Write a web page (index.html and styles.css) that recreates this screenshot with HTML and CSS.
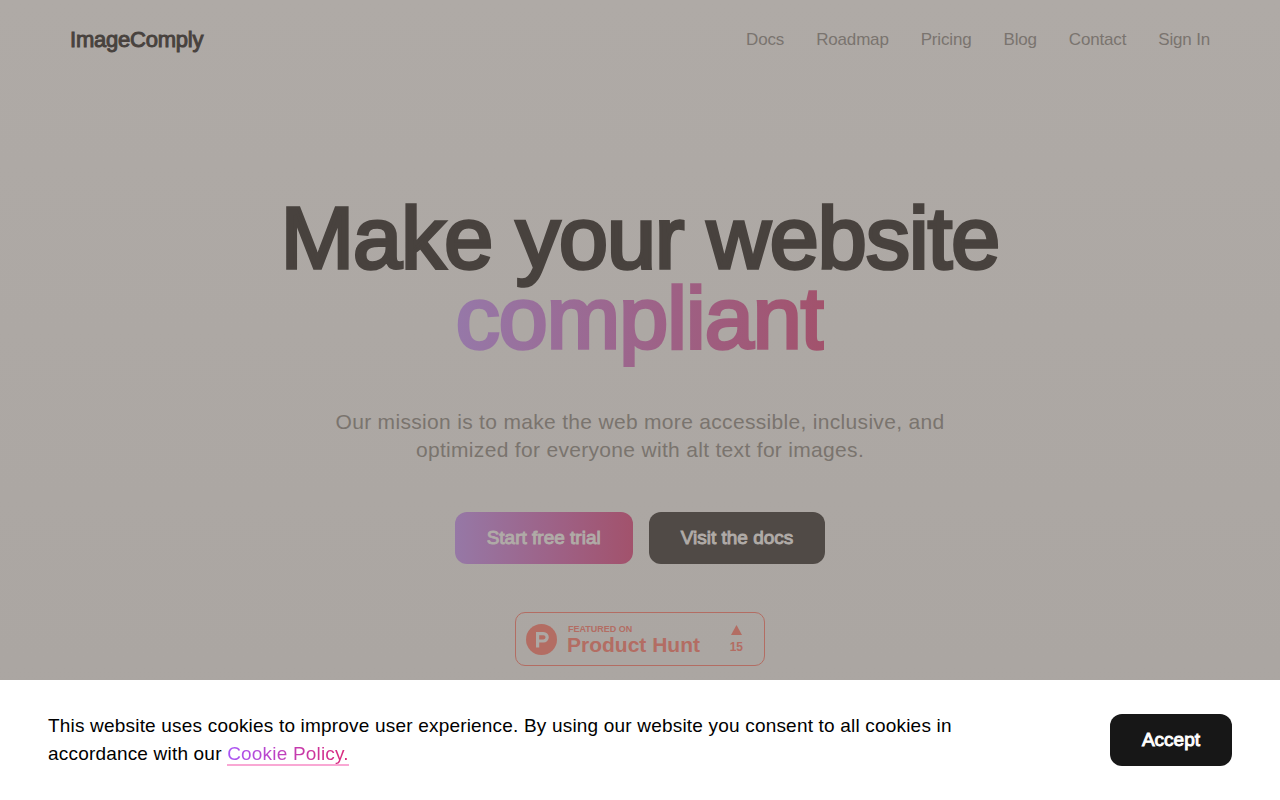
FILE: index.html
```
<!DOCTYPE html>
<html lang="en">
<head>
    <meta charset="UTF-8">
    <meta name="viewport" content="width=device-width, initial-scale=1.0">
    <title>ImageComply - Make your website compliant</title>
    <link rel="stylesheet" href="styles.css">
</head>

<body>
    <header class="header">
        <a class="logo" href="#">ImageComply</a>
        <nav class="nav">
            <a href="#">Docs</a>
            <a href="#">Roadmap</a>
            <a href="#">Pricing</a>
            <a href="#">Blog</a>
            <a href="#">Contact</a>
            <a href="#">Sign In</a>
        </nav>
    </header>

    <main class="hero">
        <h1>Make your website<br><span class="gradient-text">compliant</span></h1>
        <p class="lead">Our mission is to make the web more accessible, inclusive, and optimized for everyone with alt text for images.</p>
        <div class="actions">
            <button class="btn btn-gradient" type="button">Start free trial</button>
            <button class="btn btn-dark" type="button">Visit the docs</button>
        </div>
        <a class="badge" href="#">
            <svg class="badge-logo" viewBox="0 0 31 31" aria-hidden="true">
                <circle class="badge-circle" cx="15.5" cy="15.5" r="15.5"/>
                <path class="badge-mark" fill-rule="evenodd" d="M10 8h7.500a5.300 5.300 0 0 1 0 10.600H13.200V23.500H10zM13.200 11.200v4.300h4.200a2.150 2.150 0 0 0 0-4.300z"/>
            </svg>
            <span class="badge-text">
                <span class="badge-label">FEATURED ON</span>
                <span class="badge-name">Product Hunt</span>
            </span>
            <span class="badge-votes">
                <svg class="badge-arrow" viewBox="0 0 11 10" aria-hidden="true"><path d="M5.500 0L11 10H0z"/></svg>
                <span>15</span>
            </span>
        </a>
    </main>

    <div class="cookie-bar">
        <p>This website uses cookies to improve user experience. By using our website you consent to all cookies in accordance with our <a class="cookie-link" href="#">Cookie Policy.</a></p>
        <button class="btn btn-accept" type="button">Accept</button>
    </div>
</body>
</html>
```
FILE: styles.css
```
* {
    box-sizing: border-box;
}

body {
    font-family: 'Liberation Sans', Arial, sans-serif;
    margin: 0;
    min-height: 100vh;
    background: linear-gradient(#afaaa6, #aaa5a1);
    color: #48423e;
}

a {
    color: inherit;
    text-decoration: none;
}

/* Header */
.header {
    display: flex;
    justify-content: space-between;
    align-items: center;
    max-width: 1140px;
    height: 80px;
    margin: 0 auto;
}

.logo {
    font-size: 22px;
    letter-spacing: -0.01em;
    -webkit-text-stroke: 0.045em currentColor;
}

.nav {
    display: flex;
    gap: 32px;
    font-size: 17px;
    letter-spacing: -0.01em;
    color: #7a746f;
}

/* Hero */
.hero {
    display: flex;
    flex-direction: column;
    align-items: center;
    padding: 118px 24px 160px;
    text-align: center;
}

h1 {
    margin: 0 0 50px;
    font-size: 88px;
    font-weight: 400;
    line-height: 80px;
    letter-spacing: -0.01em;
    -webkit-text-stroke: 0.04em currentColor;
}

.gradient-text {
    background: linear-gradient(90deg, #9678a8, #9e6084 60%, #a2526c);
    -webkit-background-clip: text;
    background-clip: text;
    color: transparent;
    -webkit-text-stroke-color: transparent;
}

.lead {
    max-width: 640px;
    margin: 0 0 48px;
    font-size: 21px;
    line-height: 28px;
    letter-spacing: 0.015em;
    color: #7a746e;
}

.actions {
    display: flex;
    gap: 16px;
    margin-bottom: 48px;
}

.btn {
    height: 52px;
    padding: 0 32px;
    border: none;
    border-radius: 12px;
    font-family: inherit;
    font-size: 19px;
    color: #b0aba7;
    -webkit-text-stroke: 0.05em currentColor;
    cursor: pointer;
}

.btn-gradient {
    background: linear-gradient(90deg, #9678a6, #9e6084 60%, #a2526c);
}

.btn-dark {
    background: #504a46;
}

/* Product Hunt badge */
.badge {
    display: flex;
    align-items: center;
    width: 250px;
    height: 54px;
    padding: 0 21px 0 10px;
    border: 1px solid #b36d63;
    border-radius: 10px;
    font-weight: 700;
    color: #b36d63;
    text-align: left;
}

.badge-logo {
    width: 31px;
    height: 31px;
    margin-right: 10px;
}

.badge-circle,
.badge-arrow {
    fill: #b36d63;
}

.badge-mark {
    fill: #ada8a4;
}

.badge-text {
    display: flex;
    flex-direction: column;
    padding-top: 2px;
}

.badge-label {
    padding-left: 1px;
    font-size: 9px;
    line-height: 10px;
}

.badge-name {
    font-size: 21px;
    line-height: 22px;
}

.badge-votes {
    display: flex;
    flex-direction: column;
    align-items: center;
    gap: 6px;
    margin-left: auto;
    font-size: 12px;
    line-height: 13px;
}

.badge-arrow {
    width: 11px;
    height: 10px;
}

/* Cookie bar */
.cookie-bar {
    position: fixed;
    right: 0;
    bottom: 0;
    left: 0;
    display: flex;
    justify-content: space-between;
    align-items: center;
    gap: 48px;
    padding: 32px 48px;
    background: #fff;
    color: #000;
}

.cookie-bar p {
    max-width: 960px;
    margin: 0;
    font-size: 19px;
    line-height: 28px;
    letter-spacing: 0.01em;
}

.cookie-link {
    border-bottom: 2px solid #f9a8d4;
    background: linear-gradient(90deg, #a855f7, #db2777);
    -webkit-background-clip: text;
    background-clip: text;
    color: transparent;
}

.btn-accept {
    background: #171717;
    color: #fff;
}
```
